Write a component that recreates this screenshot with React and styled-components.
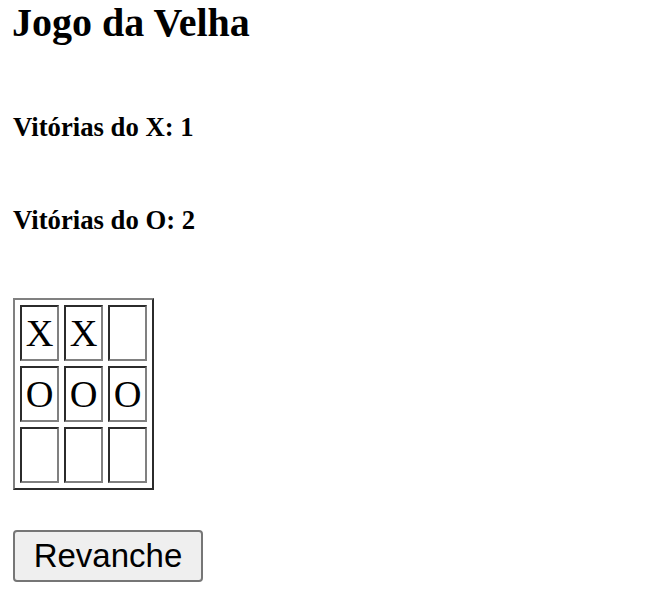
import React from "react"
import styled, { createGlobalStyle } from "styled-components"

const GlobalStyle = createGlobalStyle`
  body {
    margin: 0;
    background: #fff;
    color: #000;
    font-family: "Liberation Serif", "Times New Roman", serif;
  }
`

const board = [
  ["X", "X", ""],
  ["O", "O", "O"],
  ["", "", ""],
]

const placar = { X: 1, O: 2 }

export default function App() {
  return (
    <>
      <GlobalStyle />
      <Page>
        <Title>Jogo da Velha</Title>
        <Score>Vitórias do X: {placar.X}</Score>
        <Score>Vitórias do O: {placar.O}</Score>
        <Board>
          <tbody>
            {board.map((row, i) => (
              <tr key={i}>
                {row.map((cell, j) => (
                  <Cell key={j}>{cell}</Cell>
                ))}
              </tr>
            ))}
          </tbody>
        </Board>
        <RematchButton type="button">Revanche</RematchButton>
      </Page>
    </>
  )
}

const Page = styled.div`
  padding: 0 0 0 13px;
  display: flex;
  flex-direction: column;
  align-items: flex-start;
`

const Title = styled.h1`
  margin: 0 0 0 -1px;
  font-size: 40px;
  line-height: 45px;
  font-weight: bold;
`

const Score = styled.h3`
  margin: 67px 0 0;
  font-size: 26.7px;
  line-height: 30px;
  font-weight: bold;

  & + & {
    margin-top: 63px;
  }
`

const Board = styled.table`
  margin: 63px 0 0;
  border-collapse: separate;
  border-spacing: 5px;
  border: 2px solid;
  border-color: #808080 #2b2b2b #2b2b2b #808080;
`

const Cell = styled.td`
  box-sizing: border-box;
  width: 39px;
  height: 56px;
  padding: 0;
  border: 2px solid;
  border-color: #2b2b2b #808080 #808080 #2b2b2b;
  text-align: center;
  vertical-align: middle;
  font-size: 38.4px;
  line-height: 1;
`

const RematchButton = styled.button`
  margin: 40px 0 0;
  box-sizing: border-box;
  width: 190px;
  height: 52px;
  padding: 0;
  border: 2px solid #767676;
  border-radius: 4px;
  background: #efefef;
  color: #000;
  font-family: "Liberation Sans", Arial, sans-serif;
  font-size: 33px;
`
